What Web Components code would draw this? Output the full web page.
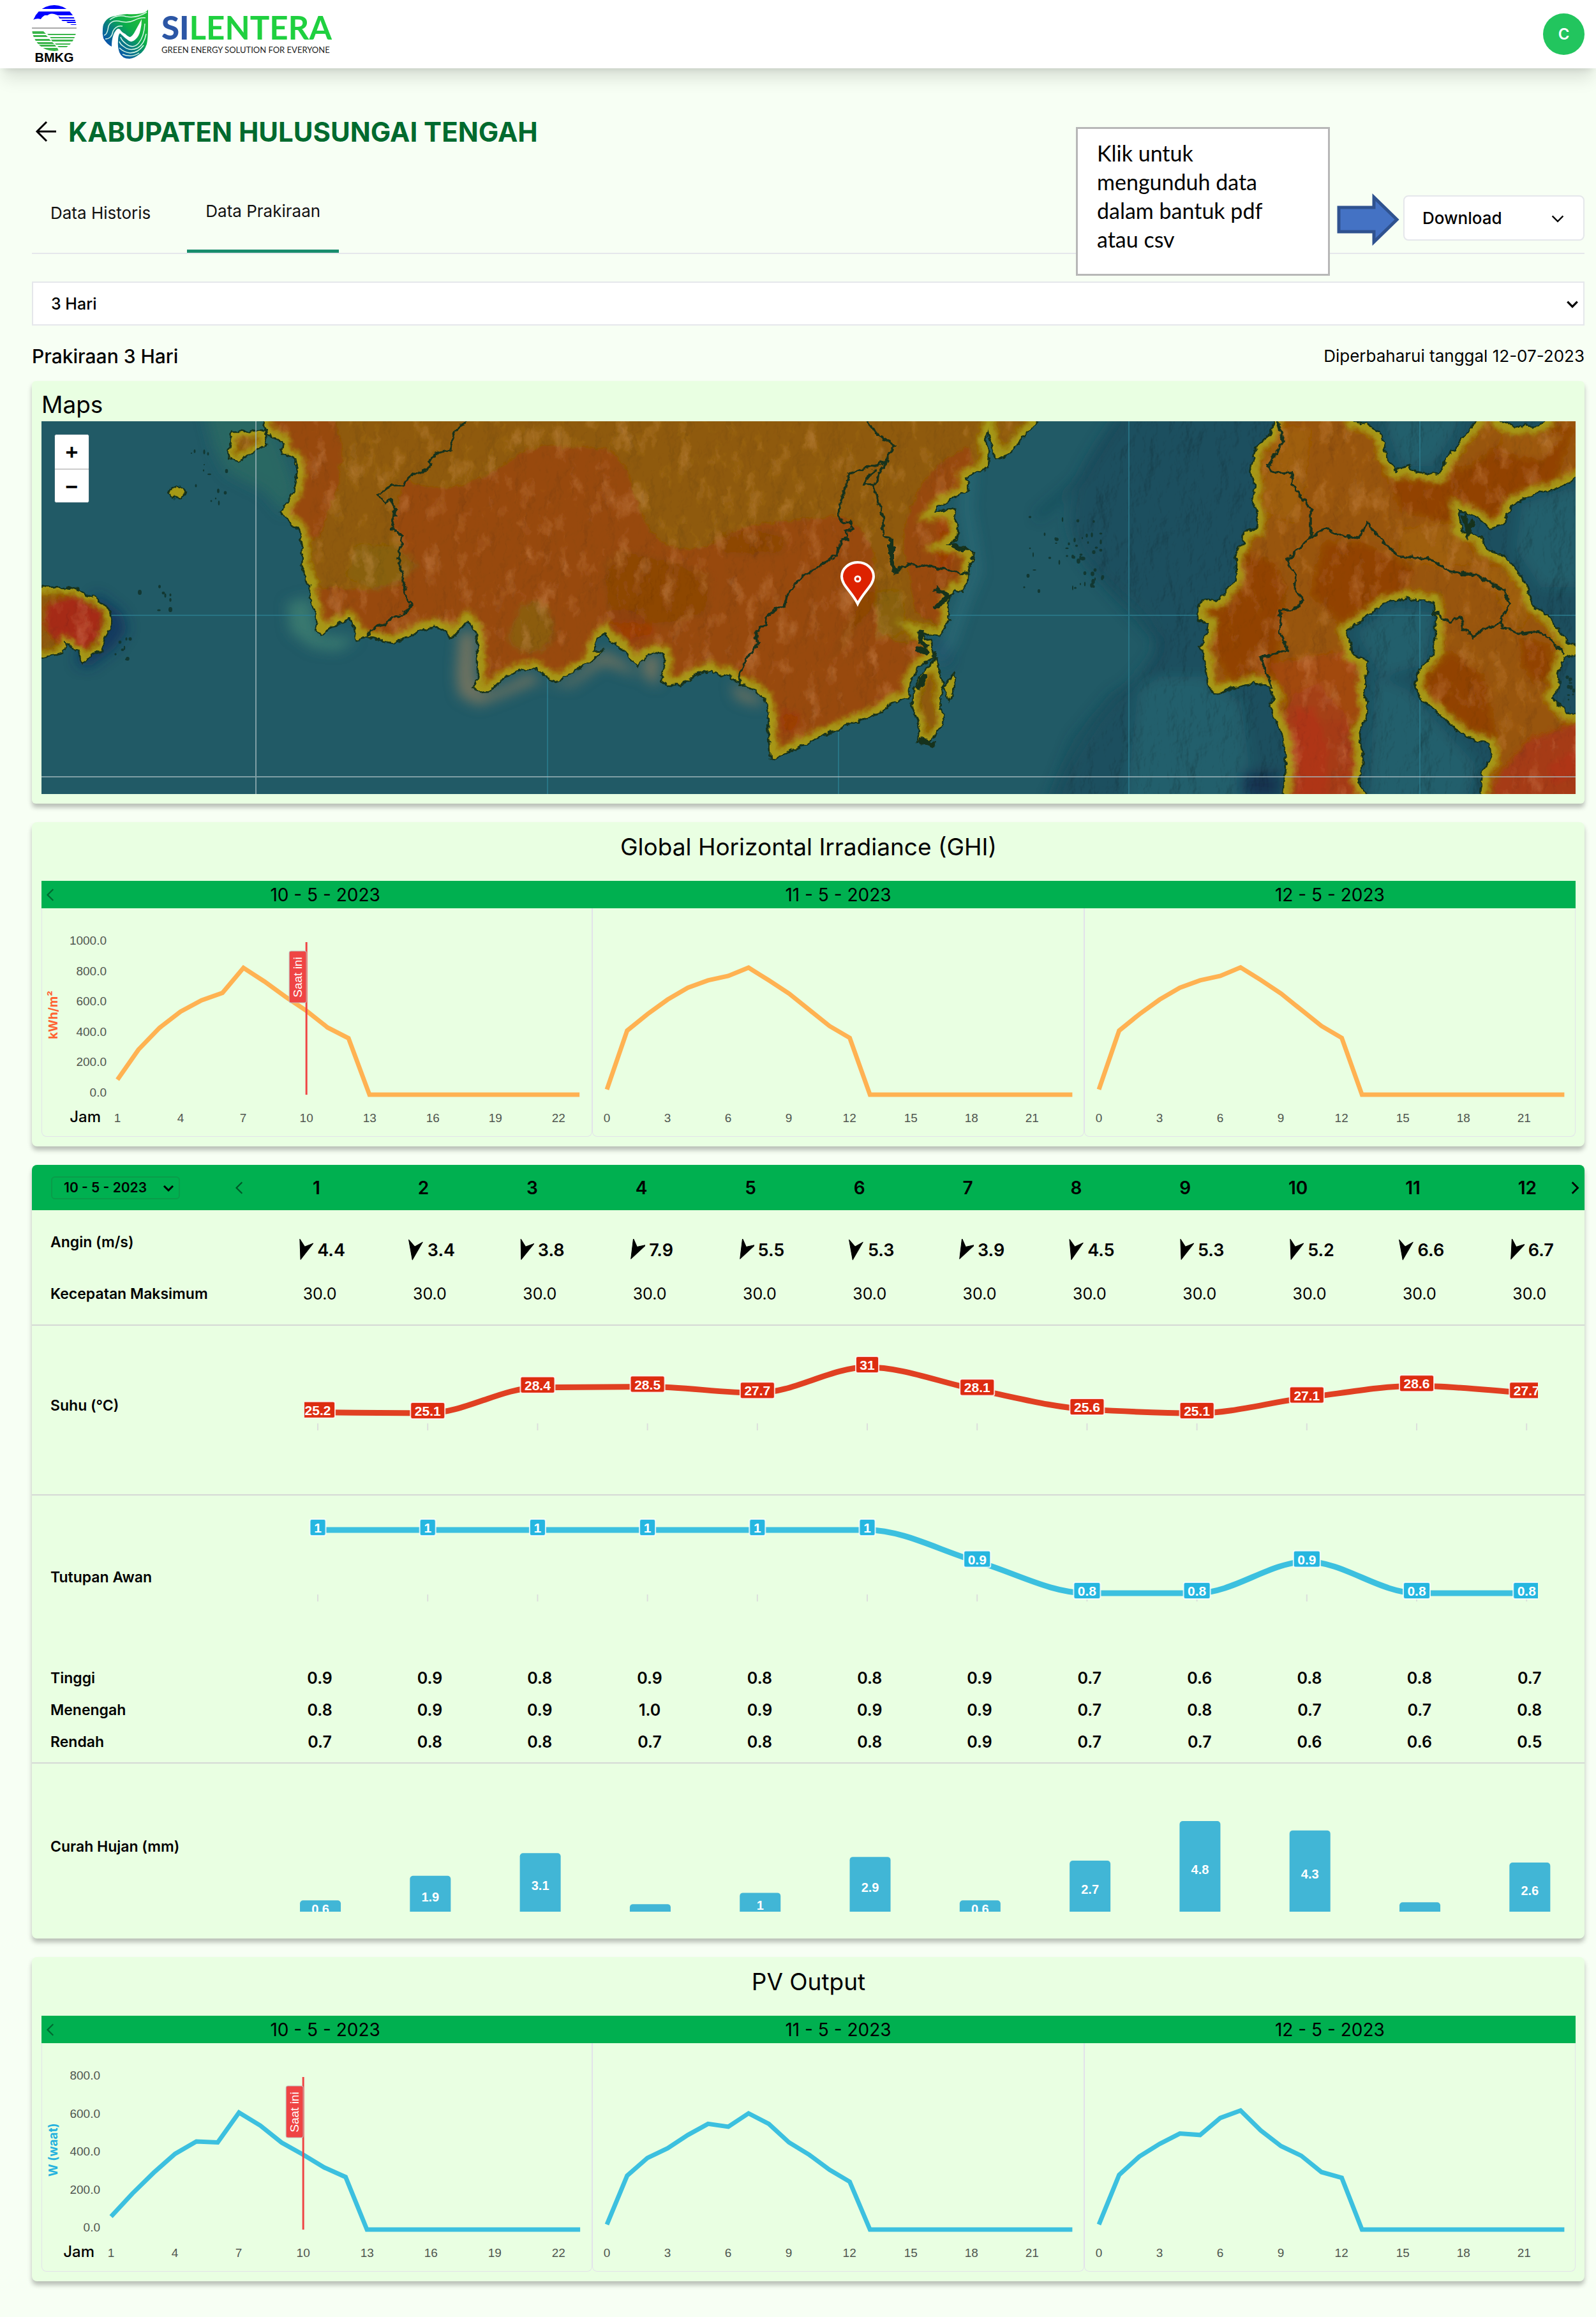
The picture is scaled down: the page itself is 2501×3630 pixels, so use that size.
<!DOCTYPE html>
<html lang="id">
<head>
<meta charset="utf-8">
<meta name="viewport" content="width=device-width, initial-scale=1">
<title>Silentera - Kabupaten Hulusungai Tengah</title>
<style>
  :root {
    --page: #f7fff4;
    --card: #e9ffe2;
    --bar: #00b050;
    --line: #e5e7eb;
    --blue: #3cc0df;
    --shadow: 0 6px 7px rgba(0, 0, 0, .25);
  }
  body { margin: 0; background: var(--page); color: #000; font-family: Inter, "Open Sans", sans-serif; font-size: 24px; }
  main { display: flex; flex-direction: column; padding: 69px 18px 56px 50px; }
  .cards { display: flex; flex-direction: column; gap: 29px; }
</style>
</head>
<body>
<app-header></app-header>
<main>
  <page-title>KABUPATEN HULUSUNGAI TENGAH</page-title>
  <tab-bar></tab-bar>
  <period-picker></period-picker>
  <div class="cards">
    <map-card></map-card>
    <day-charts kind="ghi">Global Horizontal Irradiance (GHI)</day-charts>
    <hourly-table></hourly-table>
    <day-charts kind="pv">PV Output</day-charts>
  </div>
</main>

<script>
class Base extends HTMLElement {
  constructor() { super(); this.attachShadow({ mode: 'open' }); }
  connectedCallback() { this.shadowRoot.innerHTML = '<style>*{box-sizing:border-box}:host{display:block}button,select{font:inherit;color:inherit}</style>' + this.view(); }
}
const chevron = (dir, size, width) => {
  const d = { down: 'M3 7l7 7 7-7', left: 'M13 2L5 10l8 8', right: 'M7 2l8 8-8 8' }[dir];
  return `<svg width="${size}" height="${size}" viewBox="0 0 20 20" fill="none" stroke="currentColor" stroke-width="${width}" aria-hidden="true"><path d="${d}"/></svg>`;
};

customElements.define('app-header', class extends Base {
  view() {
    return `<style>
      :host { position: relative; z-index: 1; background: #fff; box-shadow: 0 20px 25px -5px rgba(0,0,0,.12), 0 8px 10px -6px rgba(0,0,0,.1); }
      header { display: flex; align-items: center; justify-content: space-between; height: 107px; padding: 0 18px 0 50px; }
      .brands { display: flex; align-items: center; gap: 40px; }
      .bmkg { display: flex; flex-direction: column; align-items: center; width: 70px; font: bold 20px/20px "Liberation Sans", sans-serif; }
      .silentera { display: flex; align-items: center; gap: 19px; }
      .name { font: bold 51px/48px Lato, sans-serif; color: #1fd03f; }
      .name b { color: #2c56a5; }
      .tag { font: 13px/22px Lato, sans-serif; color: #222; }
      .avatar { width: 65px; height: 65px; border: 0; border-radius: 50%; background: #22c55e; color: #fff; font-size: 24px; font-weight: 600; }
      svg { display: block; }
    </style>
    <header>
      <div class="brands">
        <div class="bmkg">
          <svg width="70" height="72" viewBox="0 0 70 72"><clipPath id="e"><ellipse cx="35" cy="36" rx="35" ry="36"/></clipPath>
            <g clip-path="url(#e)"><path fill="#0000fe" d="M0 0h70v6H0zM0 10h70v6H0zM36 15q6 2 7 6h27v-2H45zM46 23h24v2H48zM54 26h16v2H56zM60 30h10v1H62z"/>
            <path fill="#0000fe" d="M0 15h22q-6 3-8 7-6-2-12 1H0z"/>
            <path fill="#fff" d="M22 19q5-7 13-5t8 8l-20 2z"/>
            <path fill="#a9a9a9" d="M0 35h70v2H0z"/>
            <path fill="#3ab54a" d="M0 41h18l4 4H0zM0 47h22l3 3H0zM24 45h46v2H26zM28 50h42v2H30zM0 53h27l3 3H0zM30 54h40v3H32zM4 58h28l3 3H6zM8 62h28l2 3H10zM14 67h26l2 5H14zM36 60h30v2H38zM40 64h22v2H42z"/></g></svg>
          <span>BMKG</span>
        </div>
        <div class="silentera">
          <svg width="74" height="78" viewBox="0 0 74 78"><defs><linearGradient id="g" x1=".1" y1=".9" x2=".75" y2=".15"><stop offset="0" stop-color="#0b3fc4"/><stop offset=".45" stop-color="#087d80"/><stop offset=".7" stop-color="#0bac4c"/><stop offset="1" stop-color="#1fbb3c"/></linearGradient></defs>
            <path fill="url(#g)" d="M72 0Q68 5 62 6 50 8 39 7 28 8 21 10 12 11 7 16 1 22 1 30 0 38 2 45 7 54 15 58 15 48 17 42 19 35 23 31 25 29 28 31 31 36 36 38 40 42 43 43 46 43 50 37 55 28 62 15 62 24 60 32 58 42 52 47 47 52 42 49 35 44 28 37 25 40 25 48 24 58 27 67 31 77 43 77 51 76 57 71 66 66 70 54 72 45 72 27z"/>
            <path fill="none" stroke="#d9f7e6" stroke-width="1.500" d="M12 16Q24 7 38 11 54 14 70 4M3 40Q8 40 10 26 14 16 26 18 40 22 50 17T68 13M5 46Q15 46 17 34 22 24 32 26M67 22Q66 42 57 53 48 62 38 54 30 48 29 43M69 38Q66 54 56 60 44 66 34 58 28 54 27 50M65 56Q56 68 44 68 34 67 27 60M58 68Q46 76 32 70"/></svg>
          <div><div class="name"><b>SI</b>LENTERA</div><div class="tag">GREEN ENERGY SOLUTION FOR EVERYONE</div></div>
        </div>
      </div>
      <button class="avatar" aria-label="Akun">C</button>
    </header>`;
  }
});

customElements.define('page-title', class extends Base {
  view() {
    return `<style>
      div { display: flex; align-items: center; gap: 18px; height: 60px; padding-left: 5px; }
      h1 { margin: 0; font-size: 42px; font-weight: 700; color: #006a2e; }
      a { color: #000; display: flex; }
    </style>
    <div><a href="#" aria-label="Kembali"><svg width="34" height="34" viewBox="0 0 34 34" fill="none" stroke="currentColor" stroke-width="3"><path d="M33 17H3M18 2L3 17l15 15"/></svg></a><h1><slot></slot></h1></div>`;
  }
});

customElements.define('tab-bar', class extends Base {
  view() {
    return `<style>
      :host { position: relative; margin-top: 32px; border-bottom: 2px solid var(--line); }
      nav { display: flex; height: 128px; gap: 28px; }
      a { display: flex; align-items: center; padding: 2px 29px 0; color: #111; text-decoration: none; font-size: 26px; }
      a.on { border-bottom: 5px solid #188c6c; }
      .dl { display: flex; align-items: center; justify-content: space-between; align-self: flex-end; width: 284px; height: 71px; margin: 0 0 19px auto; padding: 0 28px; background: #fff; border: 2px solid var(--line); border-radius: 8px; font-size: 26px; font-weight: 500; }
      .hint { position: absolute; right: 290px; top: -69px; display: flex; align-items: center; gap: 11px; }
      .hint p { margin: 0; width: 398px; height: 233px; padding: 15px 30px; background: #fff; border: 3px solid #b7b7b7; font: 34px/45px Lato, sans-serif; }
      .hint svg { margin-top: 56px; }
    </style>
    <nav><a href="#">Data Historis</a><a href="#" class="on" aria-current="page">Data Prakiraan</a>
      <button class="dl">Download ${chevron('down', 24, 2)}</button></nav>
    <div class="hint"><p>Klik untuk<br>mengunduh data<br>dalam bantuk pdf<br>atau csv</p>
      <svg width="98" height="86" viewBox="0 0 98 86"><path d="M3 24h55V8l36 35-36 35V62H3z" fill="#4472c4" stroke="#2f528f" stroke-width="5"/></svg></div>`;
  }
});

customElements.define('period-picker', class extends Base {
  view() {
    return `<style>
      :host { margin-top: 43px; }
      label { display: grid; align-items: center; }
      select, svg { grid-area: 1 / 1; }
      svg { justify-self: end; margin-right: 8px; pointer-events: none; }
      select { appearance: none; height: 69px; padding: 0 28px; border: 2px solid var(--line); background: #fff; font-size: 25px; font-weight: 500; }
      .info { display: flex; align-items: center; justify-content: space-between; height: 87px; padding-top: 8px; }
      .info b { font-size: 30px; font-weight: 500; }
      .info span { font-size: 26px; }
    </style>
    <label><select aria-label="Periode"><option>3 Hari</option></select>${chevron('down', 22, 3)}</label>
    <div class="info"><b>Prakiraan 3 Hari</b><span>Diperbaharui tanggal 12-07-2023</span></div>`;
  }
});

const KAL = 'M347 -30L347 0 354 21 378 32 376 48 397 59 401 78 396 111 374 141 382 152 403 169 409 199 407 226 420 256 420 276 428 295 430 325 439 336 457 321 481 310 491 325 495 343 515 339 549 348 572 340 595 327 618 322 632 328 641 339 655 328 667 313 681 330 683 363 683 402 677 417 687 425 701 424 721 405 750 390 776 388 790 399 805 410 826 397 855 381 881 359 866 358 872 342 883 332 891 344 902 348 915 364 934 385 948 367 964 362 974 364 977 379 971 407 980 413 1002 413 1023 399 1048 389 1053 395 1067 400 1078 397 1086 407 1116 420 1132 433 1138 450 1140 494 1143 528 1148 530 1175 516 1219 495 1273 472 1316 456 1332 441 1360 435 1362 407 1376 383 1400 371 1395 348 1378 332 1397 336 1408 336 1422 312 1420 284 1430 265 1443 267 1451 253 1453 233 1460 207 1443 195 1422 193 1435 186 1435 162 1430 150 1434 137 1400 141 1411 129 1435 118 1454 108 1449 87 1484 73 1485 51 1479 31 1484 16 1489 39 1495 59 1517 53 1536 27 1560 0 1560 -30z';
const SUL = 'M1932 -30L1932 0 1924 21 1902 43 1895 76 1902 102 1896 123 1906 147 1904 168 1883 172 1882 192 1871 204 1871 249 1845 280 1819 280 1812 290 1812 311 1829 317 1824 339 1814 353 1824 372 1826 409 1837 429 1856 421 1889 415 1900 408 1924 417 1932 431 1924 445 1932 466 1946 494 1951 543 1946 584 1946 620 2076 620 2076 584 2065 564 2071 531 2065 490 2079 458 2073 421 2079 376 2054 364 2053 347 2044 329 2068 313 2103 286 2141 277 2182 284 2185 302 2185 331 2182 364 2160 388 2152 409 2160 433 2198 466 2231 494 2269 507 2272 527 2258 551 2255 584 2255 620 2440 620 2440 462 2388 456 2368 433 2380 413 2375 400 2386 370 2440 360 2394 349 2380 331 2367 311 2337 286 2326 253 2296 213 2263 200 2255 180 2225 172 2221 139 2250 151 2269 168 2291 162 2304 131 2339 113 2372 107 2404 90 2440 84 2440 -30 2360 -30 2356 0 2345 7 2307 9 2285 0 2285 -30 2250 -30 2250 -2 2223 31 2206 53 2190 84 2147 78 2144 68 2122 78 2106 53 2101 21 2076 4 2057 0 2057 -30z';
const ISLES = 'M298 15L351 15 352 37 308 62 292 59zM-30 265L4 259 50 262 84 276 107 295 110 314 99 341 93 361 73 369 64 380 56 361 38 347 35 363-30 378zM198 112l8-9 14 0 7 8-9 9-12 0zM1403 371L1406 395 1414 411 1408 435 1415 474 1392 502 1373 502 1376 474 1364 447 1368 419 1378 395zM1430 395L1431 415 1422 439 1414 415z';
const BORDERS = 'M675 -9L652 12 642 29 641 45 618 51 604 75 572 89 569 103 549 100 529 116 538 127 546 122 555 138 549 166 565 180 559 215 566 243 572 281 579 289 572 300 552 306 535 319 515 326 509 339M1322 64L1300 71 1267 82 1257 110 1250 138 1252 156 1267 158 1270 168 1261 172 1265 185 1254 186 1246 209 1205 235 1183 253 1169 271 1164 290 1148 296 1136 308 1135 318 1124 326 1118 338 1125 349 1110 364 1102 379 1094 395 1095 413M1286 -9L1311 22 1338 39 1327 51 1322 67 1305 99 1289 99 1292 88 1308 75M1303 99L1312 130 1319 154 1319 182 1332 186 1330 205 1338 237 1357 223 1397 228 1451 240M1936 -9L1946 33 1923 68 1932 82 1959 80 1959 98 1989 139 1989 182 1951 217 1965 241 1963 264 1977 280 1965 294 1942 296 1940 331 1953 358 1911 370 1928 417M1989 182L2011 169 2041 180 2065 183 2076 158 2090 176 2128 212 2177 215 2206 235 2253 243 2291 264 2301 284 2284 319 2261 325 2244 339 2228 325 2224 306 2206 315 2185 302M2284 319L2315 333 2345 329 2367 343 2386 364';

customElements.define('map-card', class extends Base {
  view() {
    // scattered reefs and islets, placed from a fixed sequence
    let seed = 7; const rnd = () => (seed = (seed * 16807) % 2147483647) / 2147483647;
    let dots = '';
    [[1540, 150, 120, 120, 36], [140, 252, 70, 50, 8], [110, 340, 30, 35, 8], [230, 40, 60, 90, 14], [1590, 180, 80, 80, 14], [2372, 400, 30, 40, 12]].forEach(([x, y, w, h, n]) => {
      for (let i = 0; i < n; i++) dots += `<ellipse cx="${(x + rnd() * w).toFixed(0)}" cy="${(y + rnd() * h).toFixed(0)}" rx="${(1 + rnd() * 2).toFixed(1)}" ry="${(1 + rnd() * 3).toFixed(1)}"/>`;
    });
    return `<style>
      :host { background: var(--card); border-radius: 6px; box-shadow: var(--shadow); padding: 0 14px 15px 15px; }
      h2 { display: flex; align-items: center; height: 63px; margin: 0; padding-top: 10px; font-size: 37px; font-weight: 400; }
      .map { position: relative; }
      .map > svg { display: block; width: 100%; }
      .zoom { position: absolute; left: 20px; top: 20px; display: flex; flex-direction: column; width: 55px; border: 1px solid #3a6672; border-radius: 4px; background: #fff; overflow: hidden; }
      .zoom button { height: 53px; padding: 0; border: 0; background: #fff; font: bold 34px/50px "Liberation Sans", sans-serif; }
      .zoom button + button { border-top: 2px solid #ccc; }
    </style>
    <h2>Maps</h2>
    <div class="map">
      <svg viewBox="0 0 2404 584" role="img" aria-label="Peta Kalimantan dan Sulawesi">
        <defs>
          <clipPath id="land"><path d="${KAL}"/><path d="${SUL}"/><path d="${ISLES}"/></clipPath>
          <filter id="b4" filterUnits="userSpaceOnUse" x="-40" y="-40" width="2484" height="664"><feGaussianBlur stdDeviation="4"/></filter>
          <filter id="b12" filterUnits="userSpaceOnUse" x="-40" y="-40" width="2484" height="664"><feGaussianBlur stdDeviation="10"/></filter>
          <filter id="b2" filterUnits="userSpaceOnUse" x="-40" y="-40" width="2484" height="664"><feGaussianBlur stdDeviation="2"/></filter>
          <filter id="rough" filterUnits="userSpaceOnUse" x="-40" y="-40" width="2484" height="664"><feTurbulence type="fractalNoise" baseFrequency=".09" numOctaves="3" seed="4"/><feDisplacementMap in="SourceGraphic" scale="10" xChannelSelector="R" yChannelSelector="G"/></filter>
          <filter id="relief" filterUnits="userSpaceOnUse" x="0" y="0" width="2404" height="584"><feTurbulence type="fractalNoise" baseFrequency=".024 .016" numOctaves="5" seed="9" result="n"/><feDiffuseLighting in="n" surfaceScale="9" diffuseConstant="1.200" lighting-color="#fff"><feDistantLight azimuth="205" elevation="56"/></feDiffuseLighting></filter>
          <filter id="glow" filterUnits="userSpaceOnUse" x="-40" y="-40" width="2484" height="664"><feTurbulence type="fractalNoise" baseFrequency=".04 .02" numOctaves="4" seed="21"/><feColorMatrix values="0 0 0 0 .85  0 0 0 0 .42  0 0 0 0 .2  3 0 0 0 -1.600"/></filter>
          <mask id="deep"><path fill="#fff" filter="url(#b12)" d="M1720-20C1660 60 1600 120 1630 190S1750 290 1755 345 1640 440 1590 620H2440V-20z"/></mask>
        </defs>
        <rect width="2404" height="584" fill="#215a66"/>
        <g filter="url(#b12)">
          <path fill="#1b4f5f" d="M1700-30C1640 60 1590 120 1620 190S1740 290 1745 345 1630 440 1580 620H2440V-30z"/>
          <path fill="#225f6c" d="M2100-10l130 0-50 80-50 0zM2060 330l60-40 60 10-10 80-70 20zM2320 130l90-30v160l-60 0-40-60zM1720 400l100 0 60 40 20 160h-200zM2090 400l50 20 110 120-20 60h-150z"/>
          <path fill="#10234a" opacity=".7" d="M1880 550h60v40h-60z"/>
          <path fill="none" stroke="#143f50" stroke-width="8" opacity=".7" d="M1690 0l-60 90-70 60M1640 220l70 80 50 50-20 50-60 30-60 70-40 100"/>
          <path fill="#2c6b62" opacity=".8" d="M255-20h95l30 70 20 60-20 35-30-35-60-30-20-40z"/>
          <path fill="#3f7f72" opacity=".8" d="M385 285l35-10 15 60 60 5-30 20-40-5-35-25z"/>
          <path fill="#84795f" opacity=".8" d="M655 330l25 0v75l15 20 30-10 40-20 20 10-60 25-40 15-30-15-5-30zM790 410l40-5 50-45 30 15 30 25-60-20-50 35zM940 370l30-5-5 50-20-15zM1080 410l50 25-5 10-35-10z"/>
          <path fill="#12305c" opacity=".8" d="M85 270l40 30 10 25-20 30-40 30-20-5zM1400 340l20 10 5 30-20-5z"/>
          <path fill="none" stroke="#2f7480" stroke-width="14" opacity=".7" d="M1454 75l-5 60 10 60 5 40-20 50-20 60-20 30"/>
        </g>
        <rect width="2404" height="584" filter="url(#relief)" mask="url(#deep)" style="mix-blend-mode:multiply" opacity=".5"/>
        <g stroke="#2d7f92" stroke-width="2" opacity=".7"><path d="M0 304H2404M793 0V584M1249 0V584M1704 0V584M2160 0V584"/></g>
        <g filter="url(#rough)"><g clip-path="url(#land)">
          <rect x="-40" y="-40" width="2484" height="664" fill="#8f5a08"/>
          <g fill="#984a10" filter="url(#b2)">
            <path d="M340-40h110l20 80-5 60-30 80-40 10-30-90z"/>
            <path d="M569 92C630 120 680 100 730 65S790 42 865 42C900 40 915 70 925 100S945 190 1000 200C1060 205 1080 160 1140 160L1250 148C1290 160 1310 200 1305 250L1310 330 1350 350 1400 330 1360 440 1120 560 980 430 680 430 480 350 510 320 579 289 566 243 559 215 565 180 549 166z"/>
            <path d="M430 260l80 5 60-20 15 60-90 50-70-20zM1350 190C1360 110 1400 60 1455 40L1460 90 1470 200 1430 330 1370 300z"/>
          </g>
          <g filter="url(#b4)">
            <path fill="#a0360a" opacity=".6" d="M880 300q50-20 85 30l-30 15-20-5zM1405 150h18v80h-18zM1160 450l30 10-10 30-20-5z"/>
            <path fill="#874608" opacity=".6" d="M880 220l30-20 80 20 60 20-5 60-60 20-100-5zM1050 180q60-20 120 0l-10 30-90 0zM1290 260l30 10-60 80-30 30z"/>
            <path fill="#86640c" opacity=".7" d="M560 195l30 30-30 30-40 10-40-20 10-50zM750 290q40-20 50 20t-20 50-50-20zM1310 270q30-10 40 0l0 60-40 10z"/>
          </g>
          <g>
            <path fill="#985408" d="M1800-40h640v700h-640z"/>
            <g filter="url(#b4)">
            <path fill="#904006" opacity=".8" d="M1870 200l60 20 20 40-20 150-60 10-50-100zM2010 190l60 0 80 40-20 60-80 40-60-60zM2170 400l40-40 50 40 20 100-60-20-50-50zM2320 340l40 10 10 50-30 10-20-30zM2100 60l60 30 80-20 80-60 80 0-30 90-120 70-120-30z"/>
            <path fill="#a3620f" opacity=".7" d="M1930 10l60 0-20 150-60-20zM2130 170l80-10 40 60-60 10-60-20zM2250 230l40 0 40 60-10 40zM2290 20l100 0-40 40-60-10z"/>
            <path fill="#a63a15" d="M1960 430l40-20 50 60 20 130h-120l-20-90zM2330 500l110-40v160h-180l20-60z"/>
            <path fill="#a54412" opacity=".7" d="M1925 380l120-20 30 50-5 60-60 0-50-20z"/>
            <path fill="#b5321a" opacity=".6" d="M1965 450l30 0 20 60 0 80-45 0zM2360 540l50-30v40l-40 20z"/></g>
          </g>
          <path fill="#a62a12" filter="url(#b4)" d="M10 285l45-12 40 25 0 40-30 20-45-15-15-25z"/>
          <rect x="-40" y="-40" width="2484" height="664" filter="url(#glow)" opacity=".3"/>
          <rect width="2404" height="584" filter="url(#relief)" style="mix-blend-mode:multiply" opacity=".25"/>
          <g fill="none" stroke="#a8a012" stroke-width="24" opacity=".9" filter="url(#b4)"><path d="${KAL}"/><path d="${SUL}"/><path d="${ISLES}" stroke-width="18"/></g>
        </g>
        <g fill="none" stroke="#15301f" stroke-width="2.500"><path d="${KAL}"/><path d="${SUL}"/><path d="${ISLES}"/><path d="${BORDERS}" stroke-width="3.500"/>
          <path stroke-width="8" d="M1380 325l-2 20 10 10M1400 262l20 12-20 20M1370 355l20 8M1385 395l-12 24M1375 500l25 6M1428 195l20 8M2228 145l8 30 8-20M2190 300l-10 0M1332 186l0 30 6 20"/></g></g>
        <g fill="#123832">${dots}</g>
        <path d="M336 0V584M0 557H2404" stroke="#a9bcc0" stroke-width="2" opacity=".7"/>
        <path d="M1279 286c-9-19-25-29-25-43a25 22 0 0 1 50 0c0 14-16 24-25 43z" fill="#dd2200" stroke="#fff" stroke-width="4"/>
        <circle cx="1279" cy="247" r="4" fill="#dd2200" stroke="#fff" stroke-width="3"/>
      </svg>
      <div class="zoom"><button aria-label="Perbesar">+</button><button aria-label="Perkecil">−</button></div>
    </div>`;
  }
});

const CHARTS = {
  ghi: { unit: 'kWh/m²', unitColor: '#ff6232', color: '#ffb252', max: 1000, x1: 184, step: 32.9, unitY: 167,
    days: [[99, 297, 440, 547, 621, 670, 835, 745, 645, 552, 443, 372],
      [35, 422, 530, 626, 704, 753, 782, 836, 753, 666, 559, 452, 374],
      [35, 422, 530, 626, 704, 753, 782, 838, 755, 666, 559, 452, 374]] },
  pv: { unit: 'W (waat)', unitColor: '#25b2de', color: '#3cc0df', max: 800, x1: 174, step: 33.4, unitY: 167,
    days: [[69, 190, 300, 399, 464, 459, 616, 548, 458, 395, 327, 277],
      [27, 284, 377, 428, 498, 557, 542, 612, 557, 459, 394, 315, 252],
      [27, 288, 385, 451, 506, 498, 588, 627, 522, 440, 389, 303, 273]] }
};
customElements.define('day-charts', class extends Base {
  view() {
    const c = CHARTS[this.getAttribute('kind')], zero = 292, top = 54;
    const y = v => (zero - v / c.max * (zero - top)).toFixed(1);
    const dates = ['10 - 5 - 2023', '11 - 5 - 2023', '12 - 5 - 2023'];
    const plot = i => {
      const first = i === 0, w = first ? 861 : 768, x0 = first ? c.x1 - 66 : 22, st = first ? c.step : 31.7, h0 = first ? 1 : 0;
      const xs = h => x0 + (h - h0) * st;
      const pts = c.days[i].map((v, k) => `${xs(k + h0).toFixed(1)},${y(v)}`);
      pts.push(`${xs(13).toFixed(1)},${zero}`, `${xs(23).toFixed(1)},${zero}`);
      let t = '';
      for (let h = h0; h < 24; h += 3) t += `<text x="${xs(h).toFixed(0)}" y="335" text-anchor="middle">${h}</text>`;
      if (first) {
        const n = c.max / 200;
        for (let k = 0; k <= n; k++) t += `<text x="${c.x1 - 83}" y="${(295 - k * 238 / n).toFixed(0)}" text-anchor="end">${(k * 200).toFixed(1)}</text>`;
        t += `<text class="jam" x="${c.x1 - 92}" y="335" text-anchor="end">Jam</text>
          <text class="unit" fill="${c.unitColor}" transform="translate(24 ${c.unitY}) rotate(-90)" text-anchor="middle">${c.unit}</text>`;
      }
      const nx = Math.round(xs(10));
      const now = first ? `<path d="M${nx} ${top - 1}V${zero}" stroke="#ef4444" stroke-width="3"/>
        <rect x="${nx - 27}" y="67" width="27" height="81" rx="3" fill="#ef4444" stroke="#bfbfbf"/>
        <text transform="translate(${nx - 7} 108) rotate(-90)" text-anchor="middle" class="now">Saat ini</text>` : '';
      return `<div class="plot"><svg viewBox="0 0 ${w} 357"><polyline points="${pts.join(' ')}" fill="none" stroke="${c.color}" stroke-width="7"/>${now}${t}</svg></div>`;
    };
    return `<style>
      :host { background: var(--card); border-radius: 8px; box-shadow: var(--shadow); padding: 0 14px 15px 15px; }
      h2 { display: flex; align-items: center; justify-content: center; height: 92px; margin: 0; padding-bottom: 16px; font-size: 37px; font-weight: 400; }
      .days { display: grid; grid-template-columns: 863fr 770fr 770fr; height: 43px; align-items: center; background: var(--bar); font-size: 28px; text-align: center; }
      .days div:first-child { display: flex; align-items: center; }
      .days span { flex: 1; }
      .days button { display: flex; padding: 0; margin-left: 4px; border: 0; background: none; opacity: .4; }
      .plots { display: grid; grid-template-columns: 863fr 770fr 770fr; }
      .plot { border: 1px solid #e2e2ea; border-top: 0; border-radius: 0 0 8px 8px; }
      svg { display: block; }
      .plot svg { width: 100%; font: 19px "Liberation Sans", sans-serif; fill: #505650; }
      .plot svg .now { fill: #fff; font-size: 19px; }
      .jam { fill: #000; font: 500 24px Inter, sans-serif; }
      .unit { font: bold 19px Inter, sans-serif; }
    </style>
    <h2><span><slot></slot></span></h2>
    <div class="days">${dates.map((d, i) => `<div>${i ? '' : `<button aria-label="Sebelumnya">${chevron('left', 22, 2)}</button>`}<span>${d}</span></div>`).join('')}</div>
    <div class="plots">${[0, 1, 2].map(plot).join('')}</div>`;
  }
});

// smooth line through points, flat at local extremes
const smooth = p => {
  const n = p.length, m = p.map((q, i) => {
    if (!i || i === n - 1) { const a = i ? n - 2 : 0; return (p[a + 1][1] - p[a][1]) / (p[a + 1][0] - p[a][0]); }
    const a = (q[1] - p[i - 1][1]) / (q[0] - p[i - 1][0]), b = (p[i + 1][1] - q[1]) / (p[i + 1][0] - q[0]);
    return a * b <= 0 ? 0 : 2 * a * b / (a + b);
  });
  let d = `M${p[0]}`;
  for (let i = 0; i < n - 1; i++) { const h = (p[i + 1][0] - p[i][0]) / 3;
    d += `C${p[i][0] + h} ${p[i][1] + m[i] * h} ${p[i + 1][0] - h} ${p[i + 1][1] - m[i + 1] * h} ${p[i + 1]}`; }
  return d;
};
customElements.define('value-line', class extends Base {
  view() {
    const warm = this.getAttribute('tone') === 'warm';
    const vals = this.getAttribute('values').split(' ').map(Number);
    const h = warm ? 264 : 261, y = warm ? v => 65 + (31 - v) * 12.2 : v => 54 + (1 - v) * 495;
    const [line, fill] = warm ? ['#e04022', '#dd2c10'] : ['#3cc0df', '#25b6e0'];
    const pts = vals.map((v, i) => [83 + i * 172.2, y(v)]), tick = warm ? 153 : 155;
    return `<style>svg { display: block; width: 100%; } text { font: bold 21px "Liberation Sans", sans-serif; fill: #fff; }</style>
      <svg viewBox="0 0 2068 ${h}"><clipPath id="c"><path d="M62 0H1995V${h}H62z"/></clipPath><g clip-path="url(#c)">
      ${pts.map(p => `<path d="M${p[0]} ${tick}v11" stroke="#dcdfdc" stroke-width="2"/>`).join('')}
      <path d="${smooth(pts)}" fill="none" stroke="${line}" stroke-width="9"/>
      ${pts.map((p, i) => { const s = String(vals[i]), w = s.length === 1 ? 25 : s.length === 2 ? 36 : s.length === 3 ? 42 : 54;
        return `<rect x="${p[0] - w / 2}" y="${p[1] - 17}" width="${w}" height="26" rx="3" fill="${fill}" stroke="#fff" stroke-opacity=".8" stroke-width="2"/><text x="${p[0]}" y="${p[1] + 4}" text-anchor="middle">${s}</text>`; }).join('')}
      </g></svg>`;
  }
});
customElements.define('rain-bars', class extends Base {
  view() {
    const vals = this.getAttribute('values').split(' ').map(Number), base = 232;
    return `<style>svg { display: block; width: 100%; } text { font: bold 20px "Liberation Sans", sans-serif; fill: #fff; }</style>
      <svg viewBox="0 0 2068 274"><clipPath id="c"><path d="M0 0H2068V${base}H0z"/></clipPath><g clip-path="url(#c)">
      ${vals.map((v, i) => { const x = 87 + i * 172.3, t = base - v * 29.6;
        return `<rect x="${x - 32}" y="${t}" width="64" height="${base - t + 8}" rx="5" fill="#41b6d6"/>${v < .6 ? '' : `<text x="${x}" y="${(t + base) / 2 + 12}" text-anchor="middle">${v}</text>`}`; }).join('')}
      </g></svg>`;
  }
});

customElements.define('hourly-table', class extends Base {
  view() {
    const wind = [[4.4, 18], [3.4, 10], [3.8, 19], [7.9, 27], [5.5, 27], [5.3, 10], [3.9, 27], [4.5, 15], [5.3, 18], [5.2, 18], [6.6, 10], [6.7, 23]];
    const row = (name, label, cells) => `<tr class="${name}"><th scope="row">${label}</th>${cells.map(v => `<td>${v}</td>`).join('')}</tr>`;
    const nums = s => s.split(' ');
    return `<style>
      :host { background: var(--card); border-radius: 8px; box-shadow: var(--shadow); overflow: hidden; }
      table { width: 100%; border-collapse: separate; border-spacing: 0; table-layout: fixed; }
      .lab { width: 15%; }
      th, td { padding: 0; text-align: center; }
      th[scope=row] { padding-left: 29px; text-align: left; font-size: 23px; font-weight: 600; white-space: nowrap; }
      .head th { height: 71px; background: var(--bar); font-size: 28px; font-weight: 600; }
      .pick { display: flex; align-items: center; justify-content: space-between; padding: 0 28px 0 30px; }
      .pick label { display: grid; align-items: center; width: 202px; }
      .pick select, .pick label svg { grid-area: 1 / 1; }
      .pick label svg { justify-self: end; margin-right: 8px; pointer-events: none; }
      .pick select { appearance: none; height: 36px; padding: 0 18px; border: 2px solid #0a9c4a; border-radius: 6px; background: none; font-size: 21px; font-weight: 600; }
      button { padding: 0; border: 0; background: none; display: flex; justify-content: flex-end; }
      .pick button { opacity: .5; }
      .hours { display: flex; align-items: center; }
      .hours div { flex: 1; display: flex; justify-content: space-between; padding-left: 75px; }
      .hours button { width: 75px; padding-right: 5px; }
      .wind > * { height: 100px; }
      .wind td { padding-top: 24px; font-size: 27px; font-weight: 600; }
      .wind span { display: flex; align-items: center; justify-content: center; gap: 6px; }
      .max > * { height: 81px; padding-bottom: 18px; }
      .max td { font-size: 25px; }
      .line > * { border-bottom: 2px solid #d5d8d5; }
      .chart th { padding-bottom: 14px; }
      .chart.low th { padding-bottom: 6px; }
      .cover td { font-size: 25px; font-weight: 600; }
      .cover > * { height: 50px; }
      .cover.line > * { height: 59px; padding-bottom: 7px; }
    </style>
    <table><colgroup><col class="lab"><col span="12"></colgroup>
      <thead><tr class="head"><th><div class="pick"><label><select aria-label="Tanggal"><option>10 - 5 - 2023</option></select>${chevron('down', 20, 3)}</label><button aria-label="Sebelumnya">${chevron('left', 22, 2)}</button></div></th>
        <th colspan="12"><div class="hours"><div>${[...Array(12)].map((_, i) => `<span>${i + 1}</span>`).join('')}</div><button aria-label="Berikutnya">${chevron('right', 22, 2.5)}</button></div></th></tr></thead>
      <tbody>
      ${row('wind', 'Angin (m/s)', wind.map(([v, a]) => `<span><svg width="30" height="34" viewBox="-15 -17 30 34" aria-hidden="true"><path transform="rotate(${a})" stroke="#000" stroke-linejoin="round" d="M0 16L-11-14 0-5 11-14z"/></svg>${v.toFixed(1)}</span>`))}
      ${row('max line', 'Kecepatan Maksimum', Array(12).fill('30.0'))}
      <tr class="chart line"><th scope="row">Suhu (°C)</th><td colspan="12"><value-line tone="warm" values="25.2 25.1 28.4 28.5 27.7 31 28.1 25.6 25.1 27.1 28.6 27.7"></value-line></td></tr>
      <tr class="chart low"><th scope="row">Tutupan Awan</th><td colspan="12"><value-line tone="cool" values="1 1 1 1 1 1 0.9 0.8 0.8 0.9 0.8 0.8"></value-line></td></tr>
      ${row('cover', 'Tinggi', nums('0.9 0.9 0.8 0.9 0.8 0.8 0.9 0.7 0.6 0.8 0.8 0.7'))}
      ${row('cover', 'Menengah', nums('0.8 0.9 0.9 1.0 0.9 0.9 0.9 0.7 0.8 0.7 0.7 0.8'))}
      ${row('cover line', 'Rendah', nums('0.7 0.8 0.8 0.7 0.8 0.8 0.9 0.7 0.7 0.6 0.6 0.5'))}
      <tr class="chart"><th scope="row">Curah Hujan (mm)</th><td colspan="12"><rain-bars values="0.6 1.9 3.1 0.4 1 2.9 0.6 2.7 4.8 4.3 0.5 2.6"></rain-bars></td></tr>
      </tbody></table>`;
  }
});
</script>
</body>
</html>
